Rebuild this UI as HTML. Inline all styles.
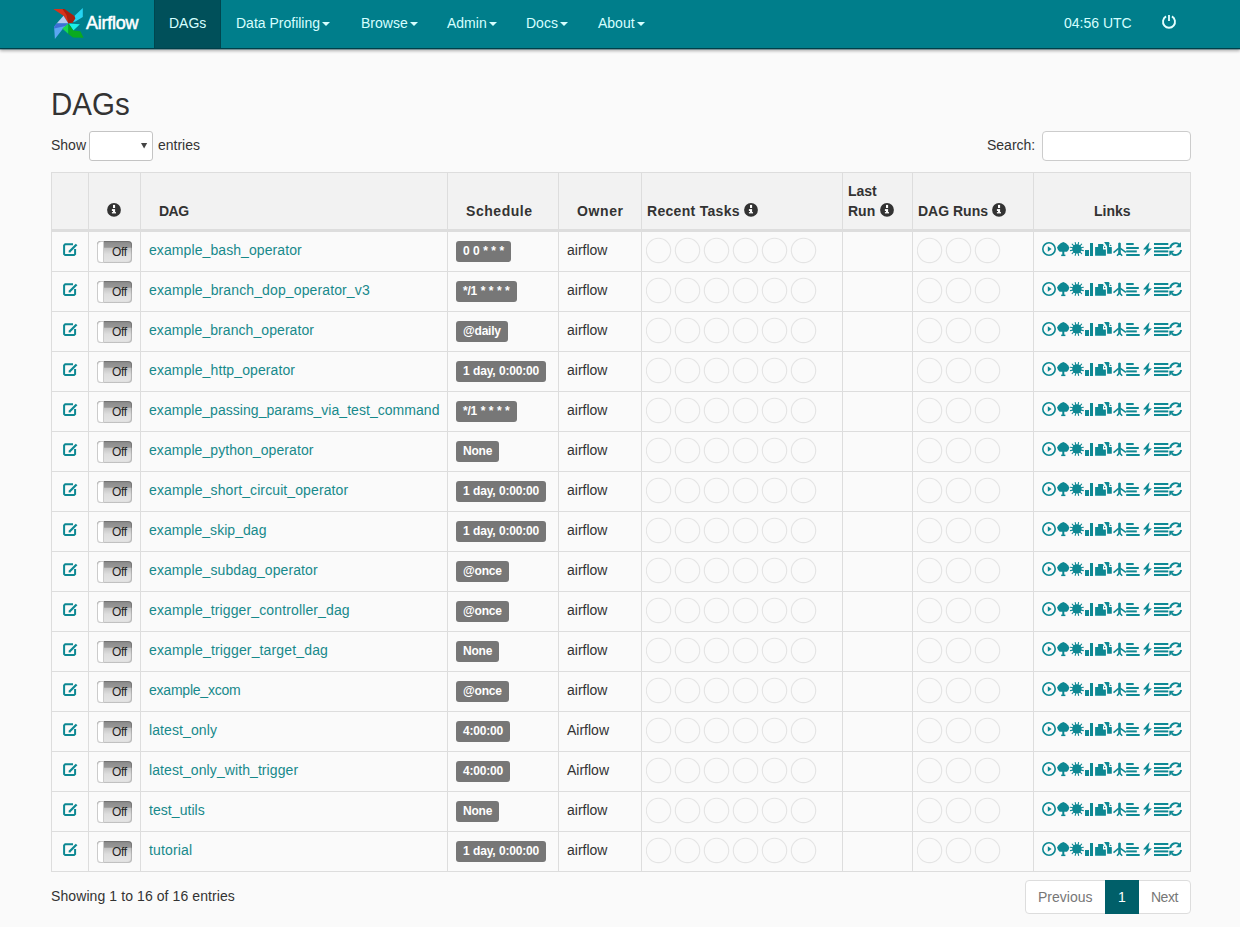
<!DOCTYPE html><html><head><meta charset="utf-8"><title>Airflow - DAGs</title><style>
*{box-sizing:border-box}
html,body{margin:0;padding:0}
body{width:1240px;height:927px;overflow:hidden;background:#fafafa;font-family:"Liberation Sans",sans-serif;font-size:14px;line-height:20px;color:#333;position:relative}
.a{position:absolute;white-space:nowrap}
#nav{position:absolute;left:0;top:0;width:1240px;height:49px;background:#007e8b;border-bottom:1px solid #003f49;box-shadow:0 1px 0 rgba(0,70,80,.35),0 2px 3px rgba(0,0,0,.3)}
#nav .it{position:absolute;top:13px;color:#d6ffff;font-size:14px;line-height:20px}
.caret{display:inline-block;width:0;height:0;margin-left:2px;vertical-align:middle;border-top:4px solid;border-right:4px solid transparent;border-left:4px solid transparent}
#act{position:absolute;left:154px;top:0;width:67px;height:48px;background:#00505a;box-shadow:inset 1px 0 0 rgba(0,0,0,.12),inset -1px 0 0 rgba(0,0,0,.12)}
h2{position:absolute;left:51px;top:86.4px;margin:0;font-size:30px;line-height:33px;font-weight:normal;color:#333;transform:scale(0.983,1.065);transform-origin:0 0}
.sel{position:absolute;left:89px;top:131px;width:64px;height:30px;background:#fff;border:1px solid #c4c4c4;border-radius:3px}
.inp{position:absolute;left:1042px;top:131px;width:149px;height:30px;background:#fff;border:1px solid #ccc;border-radius:4px}
.vl{position:absolute;top:172px;width:1px;height:700px;background:#ddd}
.hl{position:absolute;left:51px;width:1140px;height:1px;background:#ddd}
.th{position:absolute;font-weight:bold;line-height:20px}
.lnk{color:#17898b}
.lbl{position:absolute;top:241px;height:21px;background:#777;color:#fff;font-weight:bold;font-size:12px;line-height:21px;padding:0 7px;border-radius:3px;letter-spacing:-0.2px;word-spacing:0.5px}
.tog{position:absolute;left:97px;width:35px;height:22px;border-radius:4px;background:linear-gradient(#8a8a8a,#979797 28%,#c6c6c6 34%,#dedede 60%,#e6e6e6);box-shadow:inset -1px -1px 1px rgba(0,0,0,.18),inset 0 1px 1px rgba(0,0,0,.2)}
.tog .k{position:absolute;left:0;top:0;width:7px;height:22px;background:#fff;border-radius:4px 0 0 4px;border:1px solid #ccc}
.tog .t{position:absolute;left:15px;top:1px;font-size:12px;line-height:20px;color:#222;letter-spacing:-0.3px}
</style></head><body>
<div id="nav"><div id="act"></div>
<svg class="a" style="left:50px;top:5px" width="38" height="38" viewBox="0 0 38 38">
<polygon points="3.3,4.1 13.5,4.1 24.2,11.1 25.4,13.5 23,17.2 18.4,18.4 13.5,10.7" fill="#d8321b"/>
<polygon points="12.5,4.1 14.5,4.1 24.2,11.1 25.4,13.5 23,17.2 18.4,18.4 16.5,10" fill="#a8200f"/>
<polygon points="13.5,10.7 6.6,18.4 18.4,18.4" fill="#b4c8f0"/>
<polygon points="6.6,18.4 18.4,18.4 12.3,24.6 4.9,34 4.1,21.7" fill="#5aa6f2"/>
<polygon points="6.6,18.4 18.4,18.4 15.5,21 4.1,23.5 4.1,21.7" fill="#3e6fd6"/>
<polygon points="24.6,10.7 32.8,3.1 32.8,11.9 25.4,16.4 23,17.2 25.4,13.5" fill="#26d4f2"/>
<polygon points="18.8,18.4 29.9,19.3 23.4,25.4" fill="#1cf0e8"/>
<polygon points="12.3,23.5 18.4,18.4 18.4,29" fill="#17d94e"/>
<polygon points="18.4,18.4 23.4,25.4 30.3,26.2 33.6,32.8 23,32.5 18.4,29" fill="#0aaa1e"/>
</svg>
<div class="it" style="left:86px;font-size:18px;top:13px;color:#fff;-webkit-text-stroke:0.5px #fff;letter-spacing:-0.25px">Airflow</div>
<div class="it" style="left:169px">DAGs</div>
<div class="it" style="left:236px">Data Profiling<span class=caret></span></div>
<div class="it" style="left:361px">Browse<span class=caret></span></div>
<div class="it" style="left:447px">Admin<span class=caret></span></div>
<div class="it" style="left:526px">Docs<span class=caret></span></div>
<div class="it" style="left:598px">About<span class=caret></span></div>
<div class="it" style="left:1064px">04:56 UTC</div>
<svg class="a" style="left:1161px;top:14px" width="16" height="16" viewBox="0 0 16 16"><path d="M10.91 2.45 A6 6 0 1 1 5.09 2.45" fill="none" stroke="#e6ffff" stroke-width="1.9"/><line x1="8" y1="1" x2="8" y2="7" stroke="#e6ffff" stroke-width="1.8"/></svg>
</div>
<h2>DAGs</h2>
<div class="a" style="left:51px;top:135px">Show</div>
<div class="sel"></div><svg class="a" style="left:141px;top:143px" width="7" height="6"><polygon points="0,0 6.2,0 3.1,5.5" fill="#444"/></svg>
<div class="a" style="left:158px;top:135px">entries</div>
<div class="a" style="left:987px;top:135px">Search:</div>
<div class="inp"></div>
<div class="a" style="left:51px;top:173px;width:1140px;height:56px;background:#f2f2f2"></div>
<div class="a" style="left:51px;top:172px;width:1140px;height:1px;background:#ddd"></div>
<div class="a" style="left:51px;top:229px;width:1140px;height:3px;background:#ddd"></div>
<div class="hl" style="top:271px"></div>
<div class="hl" style="top:311px"></div>
<div class="hl" style="top:351px"></div>
<div class="hl" style="top:391px"></div>
<div class="hl" style="top:431px"></div>
<div class="hl" style="top:471px"></div>
<div class="hl" style="top:511px"></div>
<div class="hl" style="top:551px"></div>
<div class="hl" style="top:591px"></div>
<div class="hl" style="top:631px"></div>
<div class="hl" style="top:671px"></div>
<div class="hl" style="top:711px"></div>
<div class="hl" style="top:751px"></div>
<div class="hl" style="top:791px"></div>
<div class="hl" style="top:831px"></div>
<div class="hl" style="top:871px"></div>
<div class="vl" style="left:51px"></div>
<div class="vl" style="left:88px"></div>
<div class="vl" style="left:140px"></div>
<div class="vl" style="left:447px"></div>
<div class="vl" style="left:558px"></div>
<div class="vl" style="left:641px"></div>
<div class="vl" style="left:842px"></div>
<div class="vl" style="left:912px"></div>
<div class="vl" style="left:1033px"></div>
<div class="vl" style="left:1190px"></div>
<svg class="a" style="left:107px;top:203px" width="14" height="14" viewBox="0 0 14 14"><circle cx="7" cy="6.9" r="6.9" fill="#333"/><rect x="6" y="1.9" width="2.1" height="3.1" fill="#fff"/><rect x="6" y="6.1" width="2.1" height="3.3" fill="#fff"/><rect x="4.9" y="9.1" width="4.1" height="1.3" fill="#fff"/><rect x="4.9" y="6.1" width="1.2" height="1.9" fill="#fff"/></svg>
<div class="th a" style="left:159px;top:201px;letter-spacing:-0.5px">DAG</div>
<div class="th a" style="left:466px;top:201px;letter-spacing:0.55px">Schedule</div>
<div class="th a" style="left:577px;top:201px;letter-spacing:0.6px">Owner</div>
<div class="th a" style="left:647px;top:201px;letter-spacing:0.3px">Recent Tasks</div>
<svg class="a" style="left:744px;top:203px" width="14" height="14" viewBox="0 0 14 14"><circle cx="7" cy="6.9" r="6.9" fill="#333"/><rect x="6" y="1.9" width="2.1" height="3.1" fill="#fff"/><rect x="6" y="6.1" width="2.1" height="3.3" fill="#fff"/><rect x="4.9" y="9.1" width="4.1" height="1.3" fill="#fff"/><rect x="4.9" y="6.1" width="1.2" height="1.9" fill="#fff"/></svg>
<div class="th a" style="left:848px;top:181px">Last</div>
<div class="th a" style="left:848px;top:201px">Run</div>
<svg class="a" style="left:880px;top:203px" width="14" height="14" viewBox="0 0 14 14"><circle cx="7" cy="6.9" r="6.9" fill="#333"/><rect x="6" y="1.9" width="2.1" height="3.1" fill="#fff"/><rect x="6" y="6.1" width="2.1" height="3.3" fill="#fff"/><rect x="4.9" y="9.1" width="4.1" height="1.3" fill="#fff"/><rect x="4.9" y="6.1" width="1.2" height="1.9" fill="#fff"/></svg>
<div class="th a" style="left:918px;top:201px">DAG Runs</div>
<svg class="a" style="left:992px;top:203px" width="14" height="14" viewBox="0 0 14 14"><circle cx="7" cy="6.9" r="6.9" fill="#333"/><rect x="6" y="1.9" width="2.1" height="3.1" fill="#fff"/><rect x="6" y="6.1" width="2.1" height="3.3" fill="#fff"/><rect x="4.9" y="9.1" width="4.1" height="1.3" fill="#fff"/><rect x="4.9" y="6.1" width="1.2" height="1.9" fill="#fff"/></svg>
<div class="th a" style="left:1094px;top:201px">Links</div>
<svg class="a" style="left:61px;top:241px" width="17" height="17" viewBox="0 0 17 17"><path d="M12 3.2 L4.2 3.2 L3.1 4.3 L3.1 13 L4.2 14.1 L13 14.1 L14.1 13 L14.1 8" fill="none" stroke="#0d8893" stroke-width="2"/><path d="M8.3 10.8 L15.6 3.5" stroke="#0d8893" stroke-width="2.3"/><path d="M7.6 11.6 L8 9.6 L9.6 11.2 Z" fill="#0d8893"/></svg>
<div class="tog" style="top:241px"><div class="k"></div><div class="t">Off</div></div>
<div class="a lnk" style="left:149px;top:240px;letter-spacing:0.088px">example_bash_operator</div>
<div class="lbl" style="left:456px;top:241px">0 0 * * *</div>
<div class="a" style="left:567px;top:240px">airflow</div>
<svg class="a" style="left:646px;top:237px" width="174" height="28"><circle cx="12.5" cy="13.4" r="12.2" fill="none" stroke="#e4e4e4" stroke-width="1.1"/><circle cx="41.5" cy="13.4" r="12.2" fill="none" stroke="#e4e4e4" stroke-width="1.1"/><circle cx="70.5" cy="13.4" r="12.2" fill="none" stroke="#e4e4e4" stroke-width="1.1"/><circle cx="99.5" cy="13.4" r="12.2" fill="none" stroke="#e4e4e4" stroke-width="1.1"/><circle cx="128.5" cy="13.4" r="12.2" fill="none" stroke="#e4e4e4" stroke-width="1.1"/><circle cx="157.5" cy="13.4" r="12.2" fill="none" stroke="#e4e4e4" stroke-width="1.1"/></svg>
<svg class="a" style="left:917px;top:237px" width="87" height="28"><circle cx="12.5" cy="13.4" r="12.2" fill="none" stroke="#e4e4e4" stroke-width="1.1"/><circle cx="41.5" cy="13.4" r="12.2" fill="none" stroke="#e4e4e4" stroke-width="1.1"/><circle cx="70.5" cy="13.4" r="12.2" fill="none" stroke="#e4e4e4" stroke-width="1.1"/></svg>
<svg class="a" style="left:1042px;top:241px" width="142" height="16" viewBox="0 0 142 16" fill="#0d8893"><circle cx="7" cy="8" r="6.2" fill="none" stroke="#0d8893" stroke-width="1.6"/><path d="M5.8 5.2 L9.6 8 L5.8 10.8 Z"/><path d="M21.3 1 L24 2.2 L26 4.3 L27.4 6.6 L26.5 9 L25 10.7 L17.6 10.7 L16.1 9 L15 6.6 L16.5 4.3 L18.6 2.2 Z"/><rect x="20.3" y="10" width="2" height="4"/><rect x="19.2" y="13.6" width="4.2" height="1.5"/><circle cx="34.9" cy="7.9" r="4.7"/><path d="M35.94 4.04 L36.63 1.43 M37.73 5.07 L39.64 3.16 M38.76 6.86 L41.37 6.17 M38.76 8.94 L41.37 9.63 M37.73 10.73 L39.64 12.64 M35.94 11.76 L36.63 14.37 M33.86 11.76 L33.17 14.37 M32.07 10.73 L30.16 12.64 M31.04 8.94 L28.43 9.63 M31.04 6.86 L28.43 6.17 M32.07 5.07 L30.16 3.16 M33.86 4.04 L33.17 1.43 " stroke="#0d8893" stroke-width="1.05" stroke-linecap="round"/><rect x="43" y="9" width="4" height="6"/><rect x="48" y="2" width="3" height="13"/><path d="M53.1 6 L56.1 6 L56.1 3.1 L60.8 3.1 L61.9 4.3 L61 5.2 L61 8.5 L63.9 8.5 L63.9 14.8 L53.1 14.8 Z"/><path d="M62 5.3 L63.9 7 L62 7 Z"/><path d="M62.1 1.05 L66.7 1.05 L67.8 2.2 L67 3 L67 5.9 L69.8 5.9 L69.8 12.8 L65.1 12.8 L65.1 5.6 Z"/><path d="M67.8 3.2 L69.8 5.1 L67.8 5.1 Z"/><path d="M76.2 2.2 Q77.5 0.6 78.8 2.2 L78.8 12.5 L76.2 12.5 Z"/><path d="M76.6 7.4 L71.5 11.6 M78.4 7.4 L83.9 11.4 M77.5 12 L75 14.8 M77.5 12 L80.2 14.8" fill="none" stroke="#0d8893" stroke-width="1.6"/><rect x="84.2" y="2" width="7.5" height="2"/><rect x="84.2" y="6" width="12.6" height="2"/><rect x="84.2" y="9.4" width="10.6" height="2"/><rect x="84.2" y="13" width="13.5" height="2"/><path d="M107.6 1 L101 8.4 L104.8 8.4 L102.2 15 L110 7.4 L106.2 7.4 Z"/><rect x="112" y="2" width="14.3" height="2"/><rect x="112" y="6" width="15.5" height="2"/><rect x="112" y="9.4" width="14.3" height="2"/><rect x="112" y="13" width="14.3" height="2"/><path d="M128.2 7 A5.6 5.6 0 0 1 137.5 3.6 M139.1 9 A5.6 5.6 0 0 1 129.7 12.5" fill="none" stroke="#0d8893" stroke-width="1.9"/><path d="M139 1 L139 6.3 L133.8 6.3 Z"/><path d="M127.3 15 L127.3 9.8 L132.5 9.8 Z"/></svg>
<svg class="a" style="left:61px;top:281px" width="17" height="17" viewBox="0 0 17 17"><path d="M12 3.2 L4.2 3.2 L3.1 4.3 L3.1 13 L4.2 14.1 L13 14.1 L14.1 13 L14.1 8" fill="none" stroke="#0d8893" stroke-width="2"/><path d="M8.3 10.8 L15.6 3.5" stroke="#0d8893" stroke-width="2.3"/><path d="M7.6 11.6 L8 9.6 L9.6 11.2 Z" fill="#0d8893"/></svg>
<div class="tog" style="top:281px"><div class="k"></div><div class="t">Off</div></div>
<div class="a lnk" style="left:149px;top:280px;letter-spacing:0.121px">example_branch_dop_operator_v3</div>
<div class="lbl" style="left:456px;top:281px">*/1 * * * *</div>
<div class="a" style="left:567px;top:280px">airflow</div>
<svg class="a" style="left:646px;top:277px" width="174" height="28"><circle cx="12.5" cy="13.4" r="12.2" fill="none" stroke="#e4e4e4" stroke-width="1.1"/><circle cx="41.5" cy="13.4" r="12.2" fill="none" stroke="#e4e4e4" stroke-width="1.1"/><circle cx="70.5" cy="13.4" r="12.2" fill="none" stroke="#e4e4e4" stroke-width="1.1"/><circle cx="99.5" cy="13.4" r="12.2" fill="none" stroke="#e4e4e4" stroke-width="1.1"/><circle cx="128.5" cy="13.4" r="12.2" fill="none" stroke="#e4e4e4" stroke-width="1.1"/><circle cx="157.5" cy="13.4" r="12.2" fill="none" stroke="#e4e4e4" stroke-width="1.1"/></svg>
<svg class="a" style="left:917px;top:277px" width="87" height="28"><circle cx="12.5" cy="13.4" r="12.2" fill="none" stroke="#e4e4e4" stroke-width="1.1"/><circle cx="41.5" cy="13.4" r="12.2" fill="none" stroke="#e4e4e4" stroke-width="1.1"/><circle cx="70.5" cy="13.4" r="12.2" fill="none" stroke="#e4e4e4" stroke-width="1.1"/></svg>
<svg class="a" style="left:1042px;top:281px" width="142" height="16" viewBox="0 0 142 16" fill="#0d8893"><circle cx="7" cy="8" r="6.2" fill="none" stroke="#0d8893" stroke-width="1.6"/><path d="M5.8 5.2 L9.6 8 L5.8 10.8 Z"/><path d="M21.3 1 L24 2.2 L26 4.3 L27.4 6.6 L26.5 9 L25 10.7 L17.6 10.7 L16.1 9 L15 6.6 L16.5 4.3 L18.6 2.2 Z"/><rect x="20.3" y="10" width="2" height="4"/><rect x="19.2" y="13.6" width="4.2" height="1.5"/><circle cx="34.9" cy="7.9" r="4.7"/><path d="M35.94 4.04 L36.63 1.43 M37.73 5.07 L39.64 3.16 M38.76 6.86 L41.37 6.17 M38.76 8.94 L41.37 9.63 M37.73 10.73 L39.64 12.64 M35.94 11.76 L36.63 14.37 M33.86 11.76 L33.17 14.37 M32.07 10.73 L30.16 12.64 M31.04 8.94 L28.43 9.63 M31.04 6.86 L28.43 6.17 M32.07 5.07 L30.16 3.16 M33.86 4.04 L33.17 1.43 " stroke="#0d8893" stroke-width="1.05" stroke-linecap="round"/><rect x="43" y="9" width="4" height="6"/><rect x="48" y="2" width="3" height="13"/><path d="M53.1 6 L56.1 6 L56.1 3.1 L60.8 3.1 L61.9 4.3 L61 5.2 L61 8.5 L63.9 8.5 L63.9 14.8 L53.1 14.8 Z"/><path d="M62 5.3 L63.9 7 L62 7 Z"/><path d="M62.1 1.05 L66.7 1.05 L67.8 2.2 L67 3 L67 5.9 L69.8 5.9 L69.8 12.8 L65.1 12.8 L65.1 5.6 Z"/><path d="M67.8 3.2 L69.8 5.1 L67.8 5.1 Z"/><path d="M76.2 2.2 Q77.5 0.6 78.8 2.2 L78.8 12.5 L76.2 12.5 Z"/><path d="M76.6 7.4 L71.5 11.6 M78.4 7.4 L83.9 11.4 M77.5 12 L75 14.8 M77.5 12 L80.2 14.8" fill="none" stroke="#0d8893" stroke-width="1.6"/><rect x="84.2" y="2" width="7.5" height="2"/><rect x="84.2" y="6" width="12.6" height="2"/><rect x="84.2" y="9.4" width="10.6" height="2"/><rect x="84.2" y="13" width="13.5" height="2"/><path d="M107.6 1 L101 8.4 L104.8 8.4 L102.2 15 L110 7.4 L106.2 7.4 Z"/><rect x="112" y="2" width="14.3" height="2"/><rect x="112" y="6" width="15.5" height="2"/><rect x="112" y="9.4" width="14.3" height="2"/><rect x="112" y="13" width="14.3" height="2"/><path d="M128.2 7 A5.6 5.6 0 0 1 137.5 3.6 M139.1 9 A5.6 5.6 0 0 1 129.7 12.5" fill="none" stroke="#0d8893" stroke-width="1.9"/><path d="M139 1 L139 6.3 L133.8 6.3 Z"/><path d="M127.3 15 L127.3 9.8 L132.5 9.8 Z"/></svg>
<svg class="a" style="left:61px;top:321px" width="17" height="17" viewBox="0 0 17 17"><path d="M12 3.2 L4.2 3.2 L3.1 4.3 L3.1 13 L4.2 14.1 L13 14.1 L14.1 13 L14.1 8" fill="none" stroke="#0d8893" stroke-width="2"/><path d="M8.3 10.8 L15.6 3.5" stroke="#0d8893" stroke-width="2.3"/><path d="M7.6 11.6 L8 9.6 L9.6 11.2 Z" fill="#0d8893"/></svg>
<div class="tog" style="top:321px"><div class="k"></div><div class="t">Off</div></div>
<div class="a lnk" style="left:149px;top:320px;letter-spacing:0.068px">example_branch_operator</div>
<div class="lbl" style="left:456px;top:321px">@daily</div>
<div class="a" style="left:567px;top:320px">airflow</div>
<svg class="a" style="left:646px;top:317px" width="174" height="28"><circle cx="12.5" cy="13.4" r="12.2" fill="none" stroke="#e4e4e4" stroke-width="1.1"/><circle cx="41.5" cy="13.4" r="12.2" fill="none" stroke="#e4e4e4" stroke-width="1.1"/><circle cx="70.5" cy="13.4" r="12.2" fill="none" stroke="#e4e4e4" stroke-width="1.1"/><circle cx="99.5" cy="13.4" r="12.2" fill="none" stroke="#e4e4e4" stroke-width="1.1"/><circle cx="128.5" cy="13.4" r="12.2" fill="none" stroke="#e4e4e4" stroke-width="1.1"/><circle cx="157.5" cy="13.4" r="12.2" fill="none" stroke="#e4e4e4" stroke-width="1.1"/></svg>
<svg class="a" style="left:917px;top:317px" width="87" height="28"><circle cx="12.5" cy="13.4" r="12.2" fill="none" stroke="#e4e4e4" stroke-width="1.1"/><circle cx="41.5" cy="13.4" r="12.2" fill="none" stroke="#e4e4e4" stroke-width="1.1"/><circle cx="70.5" cy="13.4" r="12.2" fill="none" stroke="#e4e4e4" stroke-width="1.1"/></svg>
<svg class="a" style="left:1042px;top:321px" width="142" height="16" viewBox="0 0 142 16" fill="#0d8893"><circle cx="7" cy="8" r="6.2" fill="none" stroke="#0d8893" stroke-width="1.6"/><path d="M5.8 5.2 L9.6 8 L5.8 10.8 Z"/><path d="M21.3 1 L24 2.2 L26 4.3 L27.4 6.6 L26.5 9 L25 10.7 L17.6 10.7 L16.1 9 L15 6.6 L16.5 4.3 L18.6 2.2 Z"/><rect x="20.3" y="10" width="2" height="4"/><rect x="19.2" y="13.6" width="4.2" height="1.5"/><circle cx="34.9" cy="7.9" r="4.7"/><path d="M35.94 4.04 L36.63 1.43 M37.73 5.07 L39.64 3.16 M38.76 6.86 L41.37 6.17 M38.76 8.94 L41.37 9.63 M37.73 10.73 L39.64 12.64 M35.94 11.76 L36.63 14.37 M33.86 11.76 L33.17 14.37 M32.07 10.73 L30.16 12.64 M31.04 8.94 L28.43 9.63 M31.04 6.86 L28.43 6.17 M32.07 5.07 L30.16 3.16 M33.86 4.04 L33.17 1.43 " stroke="#0d8893" stroke-width="1.05" stroke-linecap="round"/><rect x="43" y="9" width="4" height="6"/><rect x="48" y="2" width="3" height="13"/><path d="M53.1 6 L56.1 6 L56.1 3.1 L60.8 3.1 L61.9 4.3 L61 5.2 L61 8.5 L63.9 8.5 L63.9 14.8 L53.1 14.8 Z"/><path d="M62 5.3 L63.9 7 L62 7 Z"/><path d="M62.1 1.05 L66.7 1.05 L67.8 2.2 L67 3 L67 5.9 L69.8 5.9 L69.8 12.8 L65.1 12.8 L65.1 5.6 Z"/><path d="M67.8 3.2 L69.8 5.1 L67.8 5.1 Z"/><path d="M76.2 2.2 Q77.5 0.6 78.8 2.2 L78.8 12.5 L76.2 12.5 Z"/><path d="M76.6 7.4 L71.5 11.6 M78.4 7.4 L83.9 11.4 M77.5 12 L75 14.8 M77.5 12 L80.2 14.8" fill="none" stroke="#0d8893" stroke-width="1.6"/><rect x="84.2" y="2" width="7.5" height="2"/><rect x="84.2" y="6" width="12.6" height="2"/><rect x="84.2" y="9.4" width="10.6" height="2"/><rect x="84.2" y="13" width="13.5" height="2"/><path d="M107.6 1 L101 8.4 L104.8 8.4 L102.2 15 L110 7.4 L106.2 7.4 Z"/><rect x="112" y="2" width="14.3" height="2"/><rect x="112" y="6" width="15.5" height="2"/><rect x="112" y="9.4" width="14.3" height="2"/><rect x="112" y="13" width="14.3" height="2"/><path d="M128.2 7 A5.6 5.6 0 0 1 137.5 3.6 M139.1 9 A5.6 5.6 0 0 1 129.7 12.5" fill="none" stroke="#0d8893" stroke-width="1.9"/><path d="M139 1 L139 6.3 L133.8 6.3 Z"/><path d="M127.3 15 L127.3 9.8 L132.5 9.8 Z"/></svg>
<svg class="a" style="left:61px;top:361px" width="17" height="17" viewBox="0 0 17 17"><path d="M12 3.2 L4.2 3.2 L3.1 4.3 L3.1 13 L4.2 14.1 L13 14.1 L14.1 13 L14.1 8" fill="none" stroke="#0d8893" stroke-width="2"/><path d="M8.3 10.8 L15.6 3.5" stroke="#0d8893" stroke-width="2.3"/><path d="M7.6 11.6 L8 9.6 L9.6 11.2 Z" fill="#0d8893"/></svg>
<div class="tog" style="top:361px"><div class="k"></div><div class="t">Off</div></div>
<div class="a lnk" style="left:149px;top:360px;letter-spacing:0.1px">example_http_operator</div>
<div class="lbl" style="left:456px;top:361px">1 day, 0:00:00</div>
<div class="a" style="left:567px;top:360px">airflow</div>
<svg class="a" style="left:646px;top:357px" width="174" height="28"><circle cx="12.5" cy="13.4" r="12.2" fill="none" stroke="#e4e4e4" stroke-width="1.1"/><circle cx="41.5" cy="13.4" r="12.2" fill="none" stroke="#e4e4e4" stroke-width="1.1"/><circle cx="70.5" cy="13.4" r="12.2" fill="none" stroke="#e4e4e4" stroke-width="1.1"/><circle cx="99.5" cy="13.4" r="12.2" fill="none" stroke="#e4e4e4" stroke-width="1.1"/><circle cx="128.5" cy="13.4" r="12.2" fill="none" stroke="#e4e4e4" stroke-width="1.1"/><circle cx="157.5" cy="13.4" r="12.2" fill="none" stroke="#e4e4e4" stroke-width="1.1"/></svg>
<svg class="a" style="left:917px;top:357px" width="87" height="28"><circle cx="12.5" cy="13.4" r="12.2" fill="none" stroke="#e4e4e4" stroke-width="1.1"/><circle cx="41.5" cy="13.4" r="12.2" fill="none" stroke="#e4e4e4" stroke-width="1.1"/><circle cx="70.5" cy="13.4" r="12.2" fill="none" stroke="#e4e4e4" stroke-width="1.1"/></svg>
<svg class="a" style="left:1042px;top:361px" width="142" height="16" viewBox="0 0 142 16" fill="#0d8893"><circle cx="7" cy="8" r="6.2" fill="none" stroke="#0d8893" stroke-width="1.6"/><path d="M5.8 5.2 L9.6 8 L5.8 10.8 Z"/><path d="M21.3 1 L24 2.2 L26 4.3 L27.4 6.6 L26.5 9 L25 10.7 L17.6 10.7 L16.1 9 L15 6.6 L16.5 4.3 L18.6 2.2 Z"/><rect x="20.3" y="10" width="2" height="4"/><rect x="19.2" y="13.6" width="4.2" height="1.5"/><circle cx="34.9" cy="7.9" r="4.7"/><path d="M35.94 4.04 L36.63 1.43 M37.73 5.07 L39.64 3.16 M38.76 6.86 L41.37 6.17 M38.76 8.94 L41.37 9.63 M37.73 10.73 L39.64 12.64 M35.94 11.76 L36.63 14.37 M33.86 11.76 L33.17 14.37 M32.07 10.73 L30.16 12.64 M31.04 8.94 L28.43 9.63 M31.04 6.86 L28.43 6.17 M32.07 5.07 L30.16 3.16 M33.86 4.04 L33.17 1.43 " stroke="#0d8893" stroke-width="1.05" stroke-linecap="round"/><rect x="43" y="9" width="4" height="6"/><rect x="48" y="2" width="3" height="13"/><path d="M53.1 6 L56.1 6 L56.1 3.1 L60.8 3.1 L61.9 4.3 L61 5.2 L61 8.5 L63.9 8.5 L63.9 14.8 L53.1 14.8 Z"/><path d="M62 5.3 L63.9 7 L62 7 Z"/><path d="M62.1 1.05 L66.7 1.05 L67.8 2.2 L67 3 L67 5.9 L69.8 5.9 L69.8 12.8 L65.1 12.8 L65.1 5.6 Z"/><path d="M67.8 3.2 L69.8 5.1 L67.8 5.1 Z"/><path d="M76.2 2.2 Q77.5 0.6 78.8 2.2 L78.8 12.5 L76.2 12.5 Z"/><path d="M76.6 7.4 L71.5 11.6 M78.4 7.4 L83.9 11.4 M77.5 12 L75 14.8 M77.5 12 L80.2 14.8" fill="none" stroke="#0d8893" stroke-width="1.6"/><rect x="84.2" y="2" width="7.5" height="2"/><rect x="84.2" y="6" width="12.6" height="2"/><rect x="84.2" y="9.4" width="10.6" height="2"/><rect x="84.2" y="13" width="13.5" height="2"/><path d="M107.6 1 L101 8.4 L104.8 8.4 L102.2 15 L110 7.4 L106.2 7.4 Z"/><rect x="112" y="2" width="14.3" height="2"/><rect x="112" y="6" width="15.5" height="2"/><rect x="112" y="9.4" width="14.3" height="2"/><rect x="112" y="13" width="14.3" height="2"/><path d="M128.2 7 A5.6 5.6 0 0 1 137.5 3.6 M139.1 9 A5.6 5.6 0 0 1 129.7 12.5" fill="none" stroke="#0d8893" stroke-width="1.9"/><path d="M139 1 L139 6.3 L133.8 6.3 Z"/><path d="M127.3 15 L127.3 9.8 L132.5 9.8 Z"/></svg>
<svg class="a" style="left:61px;top:401px" width="17" height="17" viewBox="0 0 17 17"><path d="M12 3.2 L4.2 3.2 L3.1 4.3 L3.1 13 L4.2 14.1 L13 14.1 L14.1 13 L14.1 8" fill="none" stroke="#0d8893" stroke-width="2"/><path d="M8.3 10.8 L15.6 3.5" stroke="#0d8893" stroke-width="2.3"/><path d="M7.6 11.6 L8 9.6 L9.6 11.2 Z" fill="#0d8893"/></svg>
<div class="tog" style="top:401px"><div class="k"></div><div class="t">Off</div></div>
<div class="a lnk" style="left:149px;top:400px;letter-spacing:0.046px">example_passing_params_via_test_command</div>
<div class="lbl" style="left:456px;top:401px">*/1 * * * *</div>
<div class="a" style="left:567px;top:400px">airflow</div>
<svg class="a" style="left:646px;top:397px" width="174" height="28"><circle cx="12.5" cy="13.4" r="12.2" fill="none" stroke="#e4e4e4" stroke-width="1.1"/><circle cx="41.5" cy="13.4" r="12.2" fill="none" stroke="#e4e4e4" stroke-width="1.1"/><circle cx="70.5" cy="13.4" r="12.2" fill="none" stroke="#e4e4e4" stroke-width="1.1"/><circle cx="99.5" cy="13.4" r="12.2" fill="none" stroke="#e4e4e4" stroke-width="1.1"/><circle cx="128.5" cy="13.4" r="12.2" fill="none" stroke="#e4e4e4" stroke-width="1.1"/><circle cx="157.5" cy="13.4" r="12.2" fill="none" stroke="#e4e4e4" stroke-width="1.1"/></svg>
<svg class="a" style="left:917px;top:397px" width="87" height="28"><circle cx="12.5" cy="13.4" r="12.2" fill="none" stroke="#e4e4e4" stroke-width="1.1"/><circle cx="41.5" cy="13.4" r="12.2" fill="none" stroke="#e4e4e4" stroke-width="1.1"/><circle cx="70.5" cy="13.4" r="12.2" fill="none" stroke="#e4e4e4" stroke-width="1.1"/></svg>
<svg class="a" style="left:1042px;top:401px" width="142" height="16" viewBox="0 0 142 16" fill="#0d8893"><circle cx="7" cy="8" r="6.2" fill="none" stroke="#0d8893" stroke-width="1.6"/><path d="M5.8 5.2 L9.6 8 L5.8 10.8 Z"/><path d="M21.3 1 L24 2.2 L26 4.3 L27.4 6.6 L26.5 9 L25 10.7 L17.6 10.7 L16.1 9 L15 6.6 L16.5 4.3 L18.6 2.2 Z"/><rect x="20.3" y="10" width="2" height="4"/><rect x="19.2" y="13.6" width="4.2" height="1.5"/><circle cx="34.9" cy="7.9" r="4.7"/><path d="M35.94 4.04 L36.63 1.43 M37.73 5.07 L39.64 3.16 M38.76 6.86 L41.37 6.17 M38.76 8.94 L41.37 9.63 M37.73 10.73 L39.64 12.64 M35.94 11.76 L36.63 14.37 M33.86 11.76 L33.17 14.37 M32.07 10.73 L30.16 12.64 M31.04 8.94 L28.43 9.63 M31.04 6.86 L28.43 6.17 M32.07 5.07 L30.16 3.16 M33.86 4.04 L33.17 1.43 " stroke="#0d8893" stroke-width="1.05" stroke-linecap="round"/><rect x="43" y="9" width="4" height="6"/><rect x="48" y="2" width="3" height="13"/><path d="M53.1 6 L56.1 6 L56.1 3.1 L60.8 3.1 L61.9 4.3 L61 5.2 L61 8.5 L63.9 8.5 L63.9 14.8 L53.1 14.8 Z"/><path d="M62 5.3 L63.9 7 L62 7 Z"/><path d="M62.1 1.05 L66.7 1.05 L67.8 2.2 L67 3 L67 5.9 L69.8 5.9 L69.8 12.8 L65.1 12.8 L65.1 5.6 Z"/><path d="M67.8 3.2 L69.8 5.1 L67.8 5.1 Z"/><path d="M76.2 2.2 Q77.5 0.6 78.8 2.2 L78.8 12.5 L76.2 12.5 Z"/><path d="M76.6 7.4 L71.5 11.6 M78.4 7.4 L83.9 11.4 M77.5 12 L75 14.8 M77.5 12 L80.2 14.8" fill="none" stroke="#0d8893" stroke-width="1.6"/><rect x="84.2" y="2" width="7.5" height="2"/><rect x="84.2" y="6" width="12.6" height="2"/><rect x="84.2" y="9.4" width="10.6" height="2"/><rect x="84.2" y="13" width="13.5" height="2"/><path d="M107.6 1 L101 8.4 L104.8 8.4 L102.2 15 L110 7.4 L106.2 7.4 Z"/><rect x="112" y="2" width="14.3" height="2"/><rect x="112" y="6" width="15.5" height="2"/><rect x="112" y="9.4" width="14.3" height="2"/><rect x="112" y="13" width="14.3" height="2"/><path d="M128.2 7 A5.6 5.6 0 0 1 137.5 3.6 M139.1 9 A5.6 5.6 0 0 1 129.7 12.5" fill="none" stroke="#0d8893" stroke-width="1.9"/><path d="M139 1 L139 6.3 L133.8 6.3 Z"/><path d="M127.3 15 L127.3 9.8 L132.5 9.8 Z"/></svg>
<svg class="a" style="left:61px;top:441px" width="17" height="17" viewBox="0 0 17 17"><path d="M12 3.2 L4.2 3.2 L3.1 4.3 L3.1 13 L4.2 14.1 L13 14.1 L14.1 13 L14.1 8" fill="none" stroke="#0d8893" stroke-width="2"/><path d="M8.3 10.8 L15.6 3.5" stroke="#0d8893" stroke-width="2.3"/><path d="M7.6 11.6 L8 9.6 L9.6 11.2 Z" fill="#0d8893"/></svg>
<div class="tog" style="top:441px"><div class="k"></div><div class="t">Off</div></div>
<div class="a lnk" style="left:149px;top:440px;letter-spacing:0.08px">example_python_operator</div>
<div class="lbl" style="left:456px;top:441px">None</div>
<div class="a" style="left:567px;top:440px">airflow</div>
<svg class="a" style="left:646px;top:437px" width="174" height="28"><circle cx="12.5" cy="13.4" r="12.2" fill="none" stroke="#e4e4e4" stroke-width="1.1"/><circle cx="41.5" cy="13.4" r="12.2" fill="none" stroke="#e4e4e4" stroke-width="1.1"/><circle cx="70.5" cy="13.4" r="12.2" fill="none" stroke="#e4e4e4" stroke-width="1.1"/><circle cx="99.5" cy="13.4" r="12.2" fill="none" stroke="#e4e4e4" stroke-width="1.1"/><circle cx="128.5" cy="13.4" r="12.2" fill="none" stroke="#e4e4e4" stroke-width="1.1"/><circle cx="157.5" cy="13.4" r="12.2" fill="none" stroke="#e4e4e4" stroke-width="1.1"/></svg>
<svg class="a" style="left:917px;top:437px" width="87" height="28"><circle cx="12.5" cy="13.4" r="12.2" fill="none" stroke="#e4e4e4" stroke-width="1.1"/><circle cx="41.5" cy="13.4" r="12.2" fill="none" stroke="#e4e4e4" stroke-width="1.1"/><circle cx="70.5" cy="13.4" r="12.2" fill="none" stroke="#e4e4e4" stroke-width="1.1"/></svg>
<svg class="a" style="left:1042px;top:441px" width="142" height="16" viewBox="0 0 142 16" fill="#0d8893"><circle cx="7" cy="8" r="6.2" fill="none" stroke="#0d8893" stroke-width="1.6"/><path d="M5.8 5.2 L9.6 8 L5.8 10.8 Z"/><path d="M21.3 1 L24 2.2 L26 4.3 L27.4 6.6 L26.5 9 L25 10.7 L17.6 10.7 L16.1 9 L15 6.6 L16.5 4.3 L18.6 2.2 Z"/><rect x="20.3" y="10" width="2" height="4"/><rect x="19.2" y="13.6" width="4.2" height="1.5"/><circle cx="34.9" cy="7.9" r="4.7"/><path d="M35.94 4.04 L36.63 1.43 M37.73 5.07 L39.64 3.16 M38.76 6.86 L41.37 6.17 M38.76 8.94 L41.37 9.63 M37.73 10.73 L39.64 12.64 M35.94 11.76 L36.63 14.37 M33.86 11.76 L33.17 14.37 M32.07 10.73 L30.16 12.64 M31.04 8.94 L28.43 9.63 M31.04 6.86 L28.43 6.17 M32.07 5.07 L30.16 3.16 M33.86 4.04 L33.17 1.43 " stroke="#0d8893" stroke-width="1.05" stroke-linecap="round"/><rect x="43" y="9" width="4" height="6"/><rect x="48" y="2" width="3" height="13"/><path d="M53.1 6 L56.1 6 L56.1 3.1 L60.8 3.1 L61.9 4.3 L61 5.2 L61 8.5 L63.9 8.5 L63.9 14.8 L53.1 14.8 Z"/><path d="M62 5.3 L63.9 7 L62 7 Z"/><path d="M62.1 1.05 L66.7 1.05 L67.8 2.2 L67 3 L67 5.9 L69.8 5.9 L69.8 12.8 L65.1 12.8 L65.1 5.6 Z"/><path d="M67.8 3.2 L69.8 5.1 L67.8 5.1 Z"/><path d="M76.2 2.2 Q77.5 0.6 78.8 2.2 L78.8 12.5 L76.2 12.5 Z"/><path d="M76.6 7.4 L71.5 11.6 M78.4 7.4 L83.9 11.4 M77.5 12 L75 14.8 M77.5 12 L80.2 14.8" fill="none" stroke="#0d8893" stroke-width="1.6"/><rect x="84.2" y="2" width="7.5" height="2"/><rect x="84.2" y="6" width="12.6" height="2"/><rect x="84.2" y="9.4" width="10.6" height="2"/><rect x="84.2" y="13" width="13.5" height="2"/><path d="M107.6 1 L101 8.4 L104.8 8.4 L102.2 15 L110 7.4 L106.2 7.4 Z"/><rect x="112" y="2" width="14.3" height="2"/><rect x="112" y="6" width="15.5" height="2"/><rect x="112" y="9.4" width="14.3" height="2"/><rect x="112" y="13" width="14.3" height="2"/><path d="M128.2 7 A5.6 5.6 0 0 1 137.5 3.6 M139.1 9 A5.6 5.6 0 0 1 129.7 12.5" fill="none" stroke="#0d8893" stroke-width="1.9"/><path d="M139 1 L139 6.3 L133.8 6.3 Z"/><path d="M127.3 15 L127.3 9.8 L132.5 9.8 Z"/></svg>
<svg class="a" style="left:61px;top:481px" width="17" height="17" viewBox="0 0 17 17"><path d="M12 3.2 L4.2 3.2 L3.1 4.3 L3.1 13 L4.2 14.1 L13 14.1 L14.1 13 L14.1 8" fill="none" stroke="#0d8893" stroke-width="2"/><path d="M8.3 10.8 L15.6 3.5" stroke="#0d8893" stroke-width="2.3"/><path d="M7.6 11.6 L8 9.6 L9.6 11.2 Z" fill="#0d8893"/></svg>
<div class="tog" style="top:481px"><div class="k"></div><div class="t">Off</div></div>
<div class="a lnk" style="left:149px;top:480px;letter-spacing:0.103px">example_short_circuit_operator</div>
<div class="lbl" style="left:456px;top:481px">1 day, 0:00:00</div>
<div class="a" style="left:567px;top:480px">airflow</div>
<svg class="a" style="left:646px;top:477px" width="174" height="28"><circle cx="12.5" cy="13.4" r="12.2" fill="none" stroke="#e4e4e4" stroke-width="1.1"/><circle cx="41.5" cy="13.4" r="12.2" fill="none" stroke="#e4e4e4" stroke-width="1.1"/><circle cx="70.5" cy="13.4" r="12.2" fill="none" stroke="#e4e4e4" stroke-width="1.1"/><circle cx="99.5" cy="13.4" r="12.2" fill="none" stroke="#e4e4e4" stroke-width="1.1"/><circle cx="128.5" cy="13.4" r="12.2" fill="none" stroke="#e4e4e4" stroke-width="1.1"/><circle cx="157.5" cy="13.4" r="12.2" fill="none" stroke="#e4e4e4" stroke-width="1.1"/></svg>
<svg class="a" style="left:917px;top:477px" width="87" height="28"><circle cx="12.5" cy="13.4" r="12.2" fill="none" stroke="#e4e4e4" stroke-width="1.1"/><circle cx="41.5" cy="13.4" r="12.2" fill="none" stroke="#e4e4e4" stroke-width="1.1"/><circle cx="70.5" cy="13.4" r="12.2" fill="none" stroke="#e4e4e4" stroke-width="1.1"/></svg>
<svg class="a" style="left:1042px;top:481px" width="142" height="16" viewBox="0 0 142 16" fill="#0d8893"><circle cx="7" cy="8" r="6.2" fill="none" stroke="#0d8893" stroke-width="1.6"/><path d="M5.8 5.2 L9.6 8 L5.8 10.8 Z"/><path d="M21.3 1 L24 2.2 L26 4.3 L27.4 6.6 L26.5 9 L25 10.7 L17.6 10.7 L16.1 9 L15 6.6 L16.5 4.3 L18.6 2.2 Z"/><rect x="20.3" y="10" width="2" height="4"/><rect x="19.2" y="13.6" width="4.2" height="1.5"/><circle cx="34.9" cy="7.9" r="4.7"/><path d="M35.94 4.04 L36.63 1.43 M37.73 5.07 L39.64 3.16 M38.76 6.86 L41.37 6.17 M38.76 8.94 L41.37 9.63 M37.73 10.73 L39.64 12.64 M35.94 11.76 L36.63 14.37 M33.86 11.76 L33.17 14.37 M32.07 10.73 L30.16 12.64 M31.04 8.94 L28.43 9.63 M31.04 6.86 L28.43 6.17 M32.07 5.07 L30.16 3.16 M33.86 4.04 L33.17 1.43 " stroke="#0d8893" stroke-width="1.05" stroke-linecap="round"/><rect x="43" y="9" width="4" height="6"/><rect x="48" y="2" width="3" height="13"/><path d="M53.1 6 L56.1 6 L56.1 3.1 L60.8 3.1 L61.9 4.3 L61 5.2 L61 8.5 L63.9 8.5 L63.9 14.8 L53.1 14.8 Z"/><path d="M62 5.3 L63.9 7 L62 7 Z"/><path d="M62.1 1.05 L66.7 1.05 L67.8 2.2 L67 3 L67 5.9 L69.8 5.9 L69.8 12.8 L65.1 12.8 L65.1 5.6 Z"/><path d="M67.8 3.2 L69.8 5.1 L67.8 5.1 Z"/><path d="M76.2 2.2 Q77.5 0.6 78.8 2.2 L78.8 12.5 L76.2 12.5 Z"/><path d="M76.6 7.4 L71.5 11.6 M78.4 7.4 L83.9 11.4 M77.5 12 L75 14.8 M77.5 12 L80.2 14.8" fill="none" stroke="#0d8893" stroke-width="1.6"/><rect x="84.2" y="2" width="7.5" height="2"/><rect x="84.2" y="6" width="12.6" height="2"/><rect x="84.2" y="9.4" width="10.6" height="2"/><rect x="84.2" y="13" width="13.5" height="2"/><path d="M107.6 1 L101 8.4 L104.8 8.4 L102.2 15 L110 7.4 L106.2 7.4 Z"/><rect x="112" y="2" width="14.3" height="2"/><rect x="112" y="6" width="15.5" height="2"/><rect x="112" y="9.4" width="14.3" height="2"/><rect x="112" y="13" width="14.3" height="2"/><path d="M128.2 7 A5.6 5.6 0 0 1 137.5 3.6 M139.1 9 A5.6 5.6 0 0 1 129.7 12.5" fill="none" stroke="#0d8893" stroke-width="1.9"/><path d="M139 1 L139 6.3 L133.8 6.3 Z"/><path d="M127.3 15 L127.3 9.8 L132.5 9.8 Z"/></svg>
<svg class="a" style="left:61px;top:521px" width="17" height="17" viewBox="0 0 17 17"><path d="M12 3.2 L4.2 3.2 L3.1 4.3 L3.1 13 L4.2 14.1 L13 14.1 L14.1 13 L14.1 8" fill="none" stroke="#0d8893" stroke-width="2"/><path d="M8.3 10.8 L15.6 3.5" stroke="#0d8893" stroke-width="2.3"/><path d="M7.6 11.6 L8 9.6 L9.6 11.2 Z" fill="#0d8893"/></svg>
<div class="tog" style="top:521px"><div class="k"></div><div class="t">Off</div></div>
<div class="a lnk" style="left:149px;top:520px;letter-spacing:0.05px">example_skip_dag</div>
<div class="lbl" style="left:456px;top:521px">1 day, 0:00:00</div>
<div class="a" style="left:567px;top:520px">airflow</div>
<svg class="a" style="left:646px;top:517px" width="174" height="28"><circle cx="12.5" cy="13.4" r="12.2" fill="none" stroke="#e4e4e4" stroke-width="1.1"/><circle cx="41.5" cy="13.4" r="12.2" fill="none" stroke="#e4e4e4" stroke-width="1.1"/><circle cx="70.5" cy="13.4" r="12.2" fill="none" stroke="#e4e4e4" stroke-width="1.1"/><circle cx="99.5" cy="13.4" r="12.2" fill="none" stroke="#e4e4e4" stroke-width="1.1"/><circle cx="128.5" cy="13.4" r="12.2" fill="none" stroke="#e4e4e4" stroke-width="1.1"/><circle cx="157.5" cy="13.4" r="12.2" fill="none" stroke="#e4e4e4" stroke-width="1.1"/></svg>
<svg class="a" style="left:917px;top:517px" width="87" height="28"><circle cx="12.5" cy="13.4" r="12.2" fill="none" stroke="#e4e4e4" stroke-width="1.1"/><circle cx="41.5" cy="13.4" r="12.2" fill="none" stroke="#e4e4e4" stroke-width="1.1"/><circle cx="70.5" cy="13.4" r="12.2" fill="none" stroke="#e4e4e4" stroke-width="1.1"/></svg>
<svg class="a" style="left:1042px;top:521px" width="142" height="16" viewBox="0 0 142 16" fill="#0d8893"><circle cx="7" cy="8" r="6.2" fill="none" stroke="#0d8893" stroke-width="1.6"/><path d="M5.8 5.2 L9.6 8 L5.8 10.8 Z"/><path d="M21.3 1 L24 2.2 L26 4.3 L27.4 6.6 L26.5 9 L25 10.7 L17.6 10.7 L16.1 9 L15 6.6 L16.5 4.3 L18.6 2.2 Z"/><rect x="20.3" y="10" width="2" height="4"/><rect x="19.2" y="13.6" width="4.2" height="1.5"/><circle cx="34.9" cy="7.9" r="4.7"/><path d="M35.94 4.04 L36.63 1.43 M37.73 5.07 L39.64 3.16 M38.76 6.86 L41.37 6.17 M38.76 8.94 L41.37 9.63 M37.73 10.73 L39.64 12.64 M35.94 11.76 L36.63 14.37 M33.86 11.76 L33.17 14.37 M32.07 10.73 L30.16 12.64 M31.04 8.94 L28.43 9.63 M31.04 6.86 L28.43 6.17 M32.07 5.07 L30.16 3.16 M33.86 4.04 L33.17 1.43 " stroke="#0d8893" stroke-width="1.05" stroke-linecap="round"/><rect x="43" y="9" width="4" height="6"/><rect x="48" y="2" width="3" height="13"/><path d="M53.1 6 L56.1 6 L56.1 3.1 L60.8 3.1 L61.9 4.3 L61 5.2 L61 8.5 L63.9 8.5 L63.9 14.8 L53.1 14.8 Z"/><path d="M62 5.3 L63.9 7 L62 7 Z"/><path d="M62.1 1.05 L66.7 1.05 L67.8 2.2 L67 3 L67 5.9 L69.8 5.9 L69.8 12.8 L65.1 12.8 L65.1 5.6 Z"/><path d="M67.8 3.2 L69.8 5.1 L67.8 5.1 Z"/><path d="M76.2 2.2 Q77.5 0.6 78.8 2.2 L78.8 12.5 L76.2 12.5 Z"/><path d="M76.6 7.4 L71.5 11.6 M78.4 7.4 L83.9 11.4 M77.5 12 L75 14.8 M77.5 12 L80.2 14.8" fill="none" stroke="#0d8893" stroke-width="1.6"/><rect x="84.2" y="2" width="7.5" height="2"/><rect x="84.2" y="6" width="12.6" height="2"/><rect x="84.2" y="9.4" width="10.6" height="2"/><rect x="84.2" y="13" width="13.5" height="2"/><path d="M107.6 1 L101 8.4 L104.8 8.4 L102.2 15 L110 7.4 L106.2 7.4 Z"/><rect x="112" y="2" width="14.3" height="2"/><rect x="112" y="6" width="15.5" height="2"/><rect x="112" y="9.4" width="14.3" height="2"/><rect x="112" y="13" width="14.3" height="2"/><path d="M128.2 7 A5.6 5.6 0 0 1 137.5 3.6 M139.1 9 A5.6 5.6 0 0 1 129.7 12.5" fill="none" stroke="#0d8893" stroke-width="1.9"/><path d="M139 1 L139 6.3 L133.8 6.3 Z"/><path d="M127.3 15 L127.3 9.8 L132.5 9.8 Z"/></svg>
<svg class="a" style="left:61px;top:561px" width="17" height="17" viewBox="0 0 17 17"><path d="M12 3.2 L4.2 3.2 L3.1 4.3 L3.1 13 L4.2 14.1 L13 14.1 L14.1 13 L14.1 8" fill="none" stroke="#0d8893" stroke-width="2"/><path d="M8.3 10.8 L15.6 3.5" stroke="#0d8893" stroke-width="2.3"/><path d="M7.6 11.6 L8 9.6 L9.6 11.2 Z" fill="#0d8893"/></svg>
<div class="tog" style="top:561px"><div class="k"></div><div class="t">Off</div></div>
<div class="a lnk" style="left:149px;top:560px;letter-spacing:0.091px">example_subdag_operator</div>
<div class="lbl" style="left:456px;top:561px">@once</div>
<div class="a" style="left:567px;top:560px">airflow</div>
<svg class="a" style="left:646px;top:557px" width="174" height="28"><circle cx="12.5" cy="13.4" r="12.2" fill="none" stroke="#e4e4e4" stroke-width="1.1"/><circle cx="41.5" cy="13.4" r="12.2" fill="none" stroke="#e4e4e4" stroke-width="1.1"/><circle cx="70.5" cy="13.4" r="12.2" fill="none" stroke="#e4e4e4" stroke-width="1.1"/><circle cx="99.5" cy="13.4" r="12.2" fill="none" stroke="#e4e4e4" stroke-width="1.1"/><circle cx="128.5" cy="13.4" r="12.2" fill="none" stroke="#e4e4e4" stroke-width="1.1"/><circle cx="157.5" cy="13.4" r="12.2" fill="none" stroke="#e4e4e4" stroke-width="1.1"/></svg>
<svg class="a" style="left:917px;top:557px" width="87" height="28"><circle cx="12.5" cy="13.4" r="12.2" fill="none" stroke="#e4e4e4" stroke-width="1.1"/><circle cx="41.5" cy="13.4" r="12.2" fill="none" stroke="#e4e4e4" stroke-width="1.1"/><circle cx="70.5" cy="13.4" r="12.2" fill="none" stroke="#e4e4e4" stroke-width="1.1"/></svg>
<svg class="a" style="left:1042px;top:561px" width="142" height="16" viewBox="0 0 142 16" fill="#0d8893"><circle cx="7" cy="8" r="6.2" fill="none" stroke="#0d8893" stroke-width="1.6"/><path d="M5.8 5.2 L9.6 8 L5.8 10.8 Z"/><path d="M21.3 1 L24 2.2 L26 4.3 L27.4 6.6 L26.5 9 L25 10.7 L17.6 10.7 L16.1 9 L15 6.6 L16.5 4.3 L18.6 2.2 Z"/><rect x="20.3" y="10" width="2" height="4"/><rect x="19.2" y="13.6" width="4.2" height="1.5"/><circle cx="34.9" cy="7.9" r="4.7"/><path d="M35.94 4.04 L36.63 1.43 M37.73 5.07 L39.64 3.16 M38.76 6.86 L41.37 6.17 M38.76 8.94 L41.37 9.63 M37.73 10.73 L39.64 12.64 M35.94 11.76 L36.63 14.37 M33.86 11.76 L33.17 14.37 M32.07 10.73 L30.16 12.64 M31.04 8.94 L28.43 9.63 M31.04 6.86 L28.43 6.17 M32.07 5.07 L30.16 3.16 M33.86 4.04 L33.17 1.43 " stroke="#0d8893" stroke-width="1.05" stroke-linecap="round"/><rect x="43" y="9" width="4" height="6"/><rect x="48" y="2" width="3" height="13"/><path d="M53.1 6 L56.1 6 L56.1 3.1 L60.8 3.1 L61.9 4.3 L61 5.2 L61 8.5 L63.9 8.5 L63.9 14.8 L53.1 14.8 Z"/><path d="M62 5.3 L63.9 7 L62 7 Z"/><path d="M62.1 1.05 L66.7 1.05 L67.8 2.2 L67 3 L67 5.9 L69.8 5.9 L69.8 12.8 L65.1 12.8 L65.1 5.6 Z"/><path d="M67.8 3.2 L69.8 5.1 L67.8 5.1 Z"/><path d="M76.2 2.2 Q77.5 0.6 78.8 2.2 L78.8 12.5 L76.2 12.5 Z"/><path d="M76.6 7.4 L71.5 11.6 M78.4 7.4 L83.9 11.4 M77.5 12 L75 14.8 M77.5 12 L80.2 14.8" fill="none" stroke="#0d8893" stroke-width="1.6"/><rect x="84.2" y="2" width="7.5" height="2"/><rect x="84.2" y="6" width="12.6" height="2"/><rect x="84.2" y="9.4" width="10.6" height="2"/><rect x="84.2" y="13" width="13.5" height="2"/><path d="M107.6 1 L101 8.4 L104.8 8.4 L102.2 15 L110 7.4 L106.2 7.4 Z"/><rect x="112" y="2" width="14.3" height="2"/><rect x="112" y="6" width="15.5" height="2"/><rect x="112" y="9.4" width="14.3" height="2"/><rect x="112" y="13" width="14.3" height="2"/><path d="M128.2 7 A5.6 5.6 0 0 1 137.5 3.6 M139.1 9 A5.6 5.6 0 0 1 129.7 12.5" fill="none" stroke="#0d8893" stroke-width="1.9"/><path d="M139 1 L139 6.3 L133.8 6.3 Z"/><path d="M127.3 15 L127.3 9.8 L132.5 9.8 Z"/></svg>
<svg class="a" style="left:61px;top:601px" width="17" height="17" viewBox="0 0 17 17"><path d="M12 3.2 L4.2 3.2 L3.1 4.3 L3.1 13 L4.2 14.1 L13 14.1 L14.1 13 L14.1 8" fill="none" stroke="#0d8893" stroke-width="2"/><path d="M8.3 10.8 L15.6 3.5" stroke="#0d8893" stroke-width="2.3"/><path d="M7.6 11.6 L8 9.6 L9.6 11.2 Z" fill="#0d8893"/></svg>
<div class="tog" style="top:601px"><div class="k"></div><div class="t">Off</div></div>
<div class="a lnk" style="left:149px;top:600px;letter-spacing:0.129px">example_trigger_controller_dag</div>
<div class="lbl" style="left:456px;top:601px">@once</div>
<div class="a" style="left:567px;top:600px">airflow</div>
<svg class="a" style="left:646px;top:597px" width="174" height="28"><circle cx="12.5" cy="13.4" r="12.2" fill="none" stroke="#e4e4e4" stroke-width="1.1"/><circle cx="41.5" cy="13.4" r="12.2" fill="none" stroke="#e4e4e4" stroke-width="1.1"/><circle cx="70.5" cy="13.4" r="12.2" fill="none" stroke="#e4e4e4" stroke-width="1.1"/><circle cx="99.5" cy="13.4" r="12.2" fill="none" stroke="#e4e4e4" stroke-width="1.1"/><circle cx="128.5" cy="13.4" r="12.2" fill="none" stroke="#e4e4e4" stroke-width="1.1"/><circle cx="157.5" cy="13.4" r="12.2" fill="none" stroke="#e4e4e4" stroke-width="1.1"/></svg>
<svg class="a" style="left:917px;top:597px" width="87" height="28"><circle cx="12.5" cy="13.4" r="12.2" fill="none" stroke="#e4e4e4" stroke-width="1.1"/><circle cx="41.5" cy="13.4" r="12.2" fill="none" stroke="#e4e4e4" stroke-width="1.1"/><circle cx="70.5" cy="13.4" r="12.2" fill="none" stroke="#e4e4e4" stroke-width="1.1"/></svg>
<svg class="a" style="left:1042px;top:601px" width="142" height="16" viewBox="0 0 142 16" fill="#0d8893"><circle cx="7" cy="8" r="6.2" fill="none" stroke="#0d8893" stroke-width="1.6"/><path d="M5.8 5.2 L9.6 8 L5.8 10.8 Z"/><path d="M21.3 1 L24 2.2 L26 4.3 L27.4 6.6 L26.5 9 L25 10.7 L17.6 10.7 L16.1 9 L15 6.6 L16.5 4.3 L18.6 2.2 Z"/><rect x="20.3" y="10" width="2" height="4"/><rect x="19.2" y="13.6" width="4.2" height="1.5"/><circle cx="34.9" cy="7.9" r="4.7"/><path d="M35.94 4.04 L36.63 1.43 M37.73 5.07 L39.64 3.16 M38.76 6.86 L41.37 6.17 M38.76 8.94 L41.37 9.63 M37.73 10.73 L39.64 12.64 M35.94 11.76 L36.63 14.37 M33.86 11.76 L33.17 14.37 M32.07 10.73 L30.16 12.64 M31.04 8.94 L28.43 9.63 M31.04 6.86 L28.43 6.17 M32.07 5.07 L30.16 3.16 M33.86 4.04 L33.17 1.43 " stroke="#0d8893" stroke-width="1.05" stroke-linecap="round"/><rect x="43" y="9" width="4" height="6"/><rect x="48" y="2" width="3" height="13"/><path d="M53.1 6 L56.1 6 L56.1 3.1 L60.8 3.1 L61.9 4.3 L61 5.2 L61 8.5 L63.9 8.5 L63.9 14.8 L53.1 14.8 Z"/><path d="M62 5.3 L63.9 7 L62 7 Z"/><path d="M62.1 1.05 L66.7 1.05 L67.8 2.2 L67 3 L67 5.9 L69.8 5.9 L69.8 12.8 L65.1 12.8 L65.1 5.6 Z"/><path d="M67.8 3.2 L69.8 5.1 L67.8 5.1 Z"/><path d="M76.2 2.2 Q77.5 0.6 78.8 2.2 L78.8 12.5 L76.2 12.5 Z"/><path d="M76.6 7.4 L71.5 11.6 M78.4 7.4 L83.9 11.4 M77.5 12 L75 14.8 M77.5 12 L80.2 14.8" fill="none" stroke="#0d8893" stroke-width="1.6"/><rect x="84.2" y="2" width="7.5" height="2"/><rect x="84.2" y="6" width="12.6" height="2"/><rect x="84.2" y="9.4" width="10.6" height="2"/><rect x="84.2" y="13" width="13.5" height="2"/><path d="M107.6 1 L101 8.4 L104.8 8.4 L102.2 15 L110 7.4 L106.2 7.4 Z"/><rect x="112" y="2" width="14.3" height="2"/><rect x="112" y="6" width="15.5" height="2"/><rect x="112" y="9.4" width="14.3" height="2"/><rect x="112" y="13" width="14.3" height="2"/><path d="M128.2 7 A5.6 5.6 0 0 1 137.5 3.6 M139.1 9 A5.6 5.6 0 0 1 129.7 12.5" fill="none" stroke="#0d8893" stroke-width="1.9"/><path d="M139 1 L139 6.3 L133.8 6.3 Z"/><path d="M127.3 15 L127.3 9.8 L132.5 9.8 Z"/></svg>
<svg class="a" style="left:61px;top:641px" width="17" height="17" viewBox="0 0 17 17"><path d="M12 3.2 L4.2 3.2 L3.1 4.3 L3.1 13 L4.2 14.1 L13 14.1 L14.1 13 L14.1 8" fill="none" stroke="#0d8893" stroke-width="2"/><path d="M8.3 10.8 L15.6 3.5" stroke="#0d8893" stroke-width="2.3"/><path d="M7.6 11.6 L8 9.6 L9.6 11.2 Z" fill="#0d8893"/></svg>
<div class="tog" style="top:641px"><div class="k"></div><div class="t">Off</div></div>
<div class="a lnk" style="left:149px;top:640px;letter-spacing:0.15px">example_trigger_target_dag</div>
<div class="lbl" style="left:456px;top:641px">None</div>
<div class="a" style="left:567px;top:640px">airflow</div>
<svg class="a" style="left:646px;top:637px" width="174" height="28"><circle cx="12.5" cy="13.4" r="12.2" fill="none" stroke="#e4e4e4" stroke-width="1.1"/><circle cx="41.5" cy="13.4" r="12.2" fill="none" stroke="#e4e4e4" stroke-width="1.1"/><circle cx="70.5" cy="13.4" r="12.2" fill="none" stroke="#e4e4e4" stroke-width="1.1"/><circle cx="99.5" cy="13.4" r="12.2" fill="none" stroke="#e4e4e4" stroke-width="1.1"/><circle cx="128.5" cy="13.4" r="12.2" fill="none" stroke="#e4e4e4" stroke-width="1.1"/><circle cx="157.5" cy="13.4" r="12.2" fill="none" stroke="#e4e4e4" stroke-width="1.1"/></svg>
<svg class="a" style="left:917px;top:637px" width="87" height="28"><circle cx="12.5" cy="13.4" r="12.2" fill="none" stroke="#e4e4e4" stroke-width="1.1"/><circle cx="41.5" cy="13.4" r="12.2" fill="none" stroke="#e4e4e4" stroke-width="1.1"/><circle cx="70.5" cy="13.4" r="12.2" fill="none" stroke="#e4e4e4" stroke-width="1.1"/></svg>
<svg class="a" style="left:1042px;top:641px" width="142" height="16" viewBox="0 0 142 16" fill="#0d8893"><circle cx="7" cy="8" r="6.2" fill="none" stroke="#0d8893" stroke-width="1.6"/><path d="M5.8 5.2 L9.6 8 L5.8 10.8 Z"/><path d="M21.3 1 L24 2.2 L26 4.3 L27.4 6.6 L26.5 9 L25 10.7 L17.6 10.7 L16.1 9 L15 6.6 L16.5 4.3 L18.6 2.2 Z"/><rect x="20.3" y="10" width="2" height="4"/><rect x="19.2" y="13.6" width="4.2" height="1.5"/><circle cx="34.9" cy="7.9" r="4.7"/><path d="M35.94 4.04 L36.63 1.43 M37.73 5.07 L39.64 3.16 M38.76 6.86 L41.37 6.17 M38.76 8.94 L41.37 9.63 M37.73 10.73 L39.64 12.64 M35.94 11.76 L36.63 14.37 M33.86 11.76 L33.17 14.37 M32.07 10.73 L30.16 12.64 M31.04 8.94 L28.43 9.63 M31.04 6.86 L28.43 6.17 M32.07 5.07 L30.16 3.16 M33.86 4.04 L33.17 1.43 " stroke="#0d8893" stroke-width="1.05" stroke-linecap="round"/><rect x="43" y="9" width="4" height="6"/><rect x="48" y="2" width="3" height="13"/><path d="M53.1 6 L56.1 6 L56.1 3.1 L60.8 3.1 L61.9 4.3 L61 5.2 L61 8.5 L63.9 8.5 L63.9 14.8 L53.1 14.8 Z"/><path d="M62 5.3 L63.9 7 L62 7 Z"/><path d="M62.1 1.05 L66.7 1.05 L67.8 2.2 L67 3 L67 5.9 L69.8 5.9 L69.8 12.8 L65.1 12.8 L65.1 5.6 Z"/><path d="M67.8 3.2 L69.8 5.1 L67.8 5.1 Z"/><path d="M76.2 2.2 Q77.5 0.6 78.8 2.2 L78.8 12.5 L76.2 12.5 Z"/><path d="M76.6 7.4 L71.5 11.6 M78.4 7.4 L83.9 11.4 M77.5 12 L75 14.8 M77.5 12 L80.2 14.8" fill="none" stroke="#0d8893" stroke-width="1.6"/><rect x="84.2" y="2" width="7.5" height="2"/><rect x="84.2" y="6" width="12.6" height="2"/><rect x="84.2" y="9.4" width="10.6" height="2"/><rect x="84.2" y="13" width="13.5" height="2"/><path d="M107.6 1 L101 8.4 L104.8 8.4 L102.2 15 L110 7.4 L106.2 7.4 Z"/><rect x="112" y="2" width="14.3" height="2"/><rect x="112" y="6" width="15.5" height="2"/><rect x="112" y="9.4" width="14.3" height="2"/><rect x="112" y="13" width="14.3" height="2"/><path d="M128.2 7 A5.6 5.6 0 0 1 137.5 3.6 M139.1 9 A5.6 5.6 0 0 1 129.7 12.5" fill="none" stroke="#0d8893" stroke-width="1.9"/><path d="M139 1 L139 6.3 L133.8 6.3 Z"/><path d="M127.3 15 L127.3 9.8 L132.5 9.8 Z"/></svg>
<svg class="a" style="left:61px;top:681px" width="17" height="17" viewBox="0 0 17 17"><path d="M12 3.2 L4.2 3.2 L3.1 4.3 L3.1 13 L4.2 14.1 L13 14.1 L14.1 13 L14.1 8" fill="none" stroke="#0d8893" stroke-width="2"/><path d="M8.3 10.8 L15.6 3.5" stroke="#0d8893" stroke-width="2.3"/><path d="M7.6 11.6 L8 9.6 L9.6 11.2 Z" fill="#0d8893"/></svg>
<div class="tog" style="top:681px"><div class="k"></div><div class="t">Off</div></div>
<div class="a lnk" style="left:149px;top:680px;letter-spacing:-0.227px">example_xcom</div>
<div class="lbl" style="left:456px;top:681px">@once</div>
<div class="a" style="left:567px;top:680px">airflow</div>
<svg class="a" style="left:646px;top:677px" width="174" height="28"><circle cx="12.5" cy="13.4" r="12.2" fill="none" stroke="#e4e4e4" stroke-width="1.1"/><circle cx="41.5" cy="13.4" r="12.2" fill="none" stroke="#e4e4e4" stroke-width="1.1"/><circle cx="70.5" cy="13.4" r="12.2" fill="none" stroke="#e4e4e4" stroke-width="1.1"/><circle cx="99.5" cy="13.4" r="12.2" fill="none" stroke="#e4e4e4" stroke-width="1.1"/><circle cx="128.5" cy="13.4" r="12.2" fill="none" stroke="#e4e4e4" stroke-width="1.1"/><circle cx="157.5" cy="13.4" r="12.2" fill="none" stroke="#e4e4e4" stroke-width="1.1"/></svg>
<svg class="a" style="left:917px;top:677px" width="87" height="28"><circle cx="12.5" cy="13.4" r="12.2" fill="none" stroke="#e4e4e4" stroke-width="1.1"/><circle cx="41.5" cy="13.4" r="12.2" fill="none" stroke="#e4e4e4" stroke-width="1.1"/><circle cx="70.5" cy="13.4" r="12.2" fill="none" stroke="#e4e4e4" stroke-width="1.1"/></svg>
<svg class="a" style="left:1042px;top:681px" width="142" height="16" viewBox="0 0 142 16" fill="#0d8893"><circle cx="7" cy="8" r="6.2" fill="none" stroke="#0d8893" stroke-width="1.6"/><path d="M5.8 5.2 L9.6 8 L5.8 10.8 Z"/><path d="M21.3 1 L24 2.2 L26 4.3 L27.4 6.6 L26.5 9 L25 10.7 L17.6 10.7 L16.1 9 L15 6.6 L16.5 4.3 L18.6 2.2 Z"/><rect x="20.3" y="10" width="2" height="4"/><rect x="19.2" y="13.6" width="4.2" height="1.5"/><circle cx="34.9" cy="7.9" r="4.7"/><path d="M35.94 4.04 L36.63 1.43 M37.73 5.07 L39.64 3.16 M38.76 6.86 L41.37 6.17 M38.76 8.94 L41.37 9.63 M37.73 10.73 L39.64 12.64 M35.94 11.76 L36.63 14.37 M33.86 11.76 L33.17 14.37 M32.07 10.73 L30.16 12.64 M31.04 8.94 L28.43 9.63 M31.04 6.86 L28.43 6.17 M32.07 5.07 L30.16 3.16 M33.86 4.04 L33.17 1.43 " stroke="#0d8893" stroke-width="1.05" stroke-linecap="round"/><rect x="43" y="9" width="4" height="6"/><rect x="48" y="2" width="3" height="13"/><path d="M53.1 6 L56.1 6 L56.1 3.1 L60.8 3.1 L61.9 4.3 L61 5.2 L61 8.5 L63.9 8.5 L63.9 14.8 L53.1 14.8 Z"/><path d="M62 5.3 L63.9 7 L62 7 Z"/><path d="M62.1 1.05 L66.7 1.05 L67.8 2.2 L67 3 L67 5.9 L69.8 5.9 L69.8 12.8 L65.1 12.8 L65.1 5.6 Z"/><path d="M67.8 3.2 L69.8 5.1 L67.8 5.1 Z"/><path d="M76.2 2.2 Q77.5 0.6 78.8 2.2 L78.8 12.5 L76.2 12.5 Z"/><path d="M76.6 7.4 L71.5 11.6 M78.4 7.4 L83.9 11.4 M77.5 12 L75 14.8 M77.5 12 L80.2 14.8" fill="none" stroke="#0d8893" stroke-width="1.6"/><rect x="84.2" y="2" width="7.5" height="2"/><rect x="84.2" y="6" width="12.6" height="2"/><rect x="84.2" y="9.4" width="10.6" height="2"/><rect x="84.2" y="13" width="13.5" height="2"/><path d="M107.6 1 L101 8.4 L104.8 8.4 L102.2 15 L110 7.4 L106.2 7.4 Z"/><rect x="112" y="2" width="14.3" height="2"/><rect x="112" y="6" width="15.5" height="2"/><rect x="112" y="9.4" width="14.3" height="2"/><rect x="112" y="13" width="14.3" height="2"/><path d="M128.2 7 A5.6 5.6 0 0 1 137.5 3.6 M139.1 9 A5.6 5.6 0 0 1 129.7 12.5" fill="none" stroke="#0d8893" stroke-width="1.9"/><path d="M139 1 L139 6.3 L133.8 6.3 Z"/><path d="M127.3 15 L127.3 9.8 L132.5 9.8 Z"/></svg>
<svg class="a" style="left:61px;top:721px" width="17" height="17" viewBox="0 0 17 17"><path d="M12 3.2 L4.2 3.2 L3.1 4.3 L3.1 13 L4.2 14.1 L13 14.1 L14.1 13 L14.1 8" fill="none" stroke="#0d8893" stroke-width="2"/><path d="M8.3 10.8 L15.6 3.5" stroke="#0d8893" stroke-width="2.3"/><path d="M7.6 11.6 L8 9.6 L9.6 11.2 Z" fill="#0d8893"/></svg>
<div class="tog" style="top:721px"><div class="k"></div><div class="t">Off</div></div>
<div class="a lnk" style="left:149px;top:720px;letter-spacing:0.1px">latest_only</div>
<div class="lbl" style="left:456px;top:721px">4:00:00</div>
<div class="a" style="left:567px;top:720px">Airflow</div>
<svg class="a" style="left:646px;top:717px" width="174" height="28"><circle cx="12.5" cy="13.4" r="12.2" fill="none" stroke="#e4e4e4" stroke-width="1.1"/><circle cx="41.5" cy="13.4" r="12.2" fill="none" stroke="#e4e4e4" stroke-width="1.1"/><circle cx="70.5" cy="13.4" r="12.2" fill="none" stroke="#e4e4e4" stroke-width="1.1"/><circle cx="99.5" cy="13.4" r="12.2" fill="none" stroke="#e4e4e4" stroke-width="1.1"/><circle cx="128.5" cy="13.4" r="12.2" fill="none" stroke="#e4e4e4" stroke-width="1.1"/><circle cx="157.5" cy="13.4" r="12.2" fill="none" stroke="#e4e4e4" stroke-width="1.1"/></svg>
<svg class="a" style="left:917px;top:717px" width="87" height="28"><circle cx="12.5" cy="13.4" r="12.2" fill="none" stroke="#e4e4e4" stroke-width="1.1"/><circle cx="41.5" cy="13.4" r="12.2" fill="none" stroke="#e4e4e4" stroke-width="1.1"/><circle cx="70.5" cy="13.4" r="12.2" fill="none" stroke="#e4e4e4" stroke-width="1.1"/></svg>
<svg class="a" style="left:1042px;top:721px" width="142" height="16" viewBox="0 0 142 16" fill="#0d8893"><circle cx="7" cy="8" r="6.2" fill="none" stroke="#0d8893" stroke-width="1.6"/><path d="M5.8 5.2 L9.6 8 L5.8 10.8 Z"/><path d="M21.3 1 L24 2.2 L26 4.3 L27.4 6.6 L26.5 9 L25 10.7 L17.6 10.7 L16.1 9 L15 6.6 L16.5 4.3 L18.6 2.2 Z"/><rect x="20.3" y="10" width="2" height="4"/><rect x="19.2" y="13.6" width="4.2" height="1.5"/><circle cx="34.9" cy="7.9" r="4.7"/><path d="M35.94 4.04 L36.63 1.43 M37.73 5.07 L39.64 3.16 M38.76 6.86 L41.37 6.17 M38.76 8.94 L41.37 9.63 M37.73 10.73 L39.64 12.64 M35.94 11.76 L36.63 14.37 M33.86 11.76 L33.17 14.37 M32.07 10.73 L30.16 12.64 M31.04 8.94 L28.43 9.63 M31.04 6.86 L28.43 6.17 M32.07 5.07 L30.16 3.16 M33.86 4.04 L33.17 1.43 " stroke="#0d8893" stroke-width="1.05" stroke-linecap="round"/><rect x="43" y="9" width="4" height="6"/><rect x="48" y="2" width="3" height="13"/><path d="M53.1 6 L56.1 6 L56.1 3.1 L60.8 3.1 L61.9 4.3 L61 5.2 L61 8.5 L63.9 8.5 L63.9 14.8 L53.1 14.8 Z"/><path d="M62 5.3 L63.9 7 L62 7 Z"/><path d="M62.1 1.05 L66.7 1.05 L67.8 2.2 L67 3 L67 5.9 L69.8 5.9 L69.8 12.8 L65.1 12.8 L65.1 5.6 Z"/><path d="M67.8 3.2 L69.8 5.1 L67.8 5.1 Z"/><path d="M76.2 2.2 Q77.5 0.6 78.8 2.2 L78.8 12.5 L76.2 12.5 Z"/><path d="M76.6 7.4 L71.5 11.6 M78.4 7.4 L83.9 11.4 M77.5 12 L75 14.8 M77.5 12 L80.2 14.8" fill="none" stroke="#0d8893" stroke-width="1.6"/><rect x="84.2" y="2" width="7.5" height="2"/><rect x="84.2" y="6" width="12.6" height="2"/><rect x="84.2" y="9.4" width="10.6" height="2"/><rect x="84.2" y="13" width="13.5" height="2"/><path d="M107.6 1 L101 8.4 L104.8 8.4 L102.2 15 L110 7.4 L106.2 7.4 Z"/><rect x="112" y="2" width="14.3" height="2"/><rect x="112" y="6" width="15.5" height="2"/><rect x="112" y="9.4" width="14.3" height="2"/><rect x="112" y="13" width="14.3" height="2"/><path d="M128.2 7 A5.6 5.6 0 0 1 137.5 3.6 M139.1 9 A5.6 5.6 0 0 1 129.7 12.5" fill="none" stroke="#0d8893" stroke-width="1.9"/><path d="M139 1 L139 6.3 L133.8 6.3 Z"/><path d="M127.3 15 L127.3 9.8 L132.5 9.8 Z"/></svg>
<svg class="a" style="left:61px;top:761px" width="17" height="17" viewBox="0 0 17 17"><path d="M12 3.2 L4.2 3.2 L3.1 4.3 L3.1 13 L4.2 14.1 L13 14.1 L14.1 13 L14.1 8" fill="none" stroke="#0d8893" stroke-width="2"/><path d="M8.3 10.8 L15.6 3.5" stroke="#0d8893" stroke-width="2.3"/><path d="M7.6 11.6 L8 9.6 L9.6 11.2 Z" fill="#0d8893"/></svg>
<div class="tog" style="top:761px"><div class="k"></div><div class="t">Off</div></div>
<div class="a lnk" style="left:149px;top:760px;letter-spacing:0.087px">latest_only_with_trigger</div>
<div class="lbl" style="left:456px;top:761px">4:00:00</div>
<div class="a" style="left:567px;top:760px">Airflow</div>
<svg class="a" style="left:646px;top:757px" width="174" height="28"><circle cx="12.5" cy="13.4" r="12.2" fill="none" stroke="#e4e4e4" stroke-width="1.1"/><circle cx="41.5" cy="13.4" r="12.2" fill="none" stroke="#e4e4e4" stroke-width="1.1"/><circle cx="70.5" cy="13.4" r="12.2" fill="none" stroke="#e4e4e4" stroke-width="1.1"/><circle cx="99.5" cy="13.4" r="12.2" fill="none" stroke="#e4e4e4" stroke-width="1.1"/><circle cx="128.5" cy="13.4" r="12.2" fill="none" stroke="#e4e4e4" stroke-width="1.1"/><circle cx="157.5" cy="13.4" r="12.2" fill="none" stroke="#e4e4e4" stroke-width="1.1"/></svg>
<svg class="a" style="left:917px;top:757px" width="87" height="28"><circle cx="12.5" cy="13.4" r="12.2" fill="none" stroke="#e4e4e4" stroke-width="1.1"/><circle cx="41.5" cy="13.4" r="12.2" fill="none" stroke="#e4e4e4" stroke-width="1.1"/><circle cx="70.5" cy="13.4" r="12.2" fill="none" stroke="#e4e4e4" stroke-width="1.1"/></svg>
<svg class="a" style="left:1042px;top:761px" width="142" height="16" viewBox="0 0 142 16" fill="#0d8893"><circle cx="7" cy="8" r="6.2" fill="none" stroke="#0d8893" stroke-width="1.6"/><path d="M5.8 5.2 L9.6 8 L5.8 10.8 Z"/><path d="M21.3 1 L24 2.2 L26 4.3 L27.4 6.6 L26.5 9 L25 10.7 L17.6 10.7 L16.1 9 L15 6.6 L16.5 4.3 L18.6 2.2 Z"/><rect x="20.3" y="10" width="2" height="4"/><rect x="19.2" y="13.6" width="4.2" height="1.5"/><circle cx="34.9" cy="7.9" r="4.7"/><path d="M35.94 4.04 L36.63 1.43 M37.73 5.07 L39.64 3.16 M38.76 6.86 L41.37 6.17 M38.76 8.94 L41.37 9.63 M37.73 10.73 L39.64 12.64 M35.94 11.76 L36.63 14.37 M33.86 11.76 L33.17 14.37 M32.07 10.73 L30.16 12.64 M31.04 8.94 L28.43 9.63 M31.04 6.86 L28.43 6.17 M32.07 5.07 L30.16 3.16 M33.86 4.04 L33.17 1.43 " stroke="#0d8893" stroke-width="1.05" stroke-linecap="round"/><rect x="43" y="9" width="4" height="6"/><rect x="48" y="2" width="3" height="13"/><path d="M53.1 6 L56.1 6 L56.1 3.1 L60.8 3.1 L61.9 4.3 L61 5.2 L61 8.5 L63.9 8.5 L63.9 14.8 L53.1 14.8 Z"/><path d="M62 5.3 L63.9 7 L62 7 Z"/><path d="M62.1 1.05 L66.7 1.05 L67.8 2.2 L67 3 L67 5.9 L69.8 5.9 L69.8 12.8 L65.1 12.8 L65.1 5.6 Z"/><path d="M67.8 3.2 L69.8 5.1 L67.8 5.1 Z"/><path d="M76.2 2.2 Q77.5 0.6 78.8 2.2 L78.8 12.5 L76.2 12.5 Z"/><path d="M76.6 7.4 L71.5 11.6 M78.4 7.4 L83.9 11.4 M77.5 12 L75 14.8 M77.5 12 L80.2 14.8" fill="none" stroke="#0d8893" stroke-width="1.6"/><rect x="84.2" y="2" width="7.5" height="2"/><rect x="84.2" y="6" width="12.6" height="2"/><rect x="84.2" y="9.4" width="10.6" height="2"/><rect x="84.2" y="13" width="13.5" height="2"/><path d="M107.6 1 L101 8.4 L104.8 8.4 L102.2 15 L110 7.4 L106.2 7.4 Z"/><rect x="112" y="2" width="14.3" height="2"/><rect x="112" y="6" width="15.5" height="2"/><rect x="112" y="9.4" width="14.3" height="2"/><rect x="112" y="13" width="14.3" height="2"/><path d="M128.2 7 A5.6 5.6 0 0 1 137.5 3.6 M139.1 9 A5.6 5.6 0 0 1 129.7 12.5" fill="none" stroke="#0d8893" stroke-width="1.9"/><path d="M139 1 L139 6.3 L133.8 6.3 Z"/><path d="M127.3 15 L127.3 9.8 L132.5 9.8 Z"/></svg>
<svg class="a" style="left:61px;top:801px" width="17" height="17" viewBox="0 0 17 17"><path d="M12 3.2 L4.2 3.2 L3.1 4.3 L3.1 13 L4.2 14.1 L13 14.1 L14.1 13 L14.1 8" fill="none" stroke="#0d8893" stroke-width="2"/><path d="M8.3 10.8 L15.6 3.5" stroke="#0d8893" stroke-width="2.3"/><path d="M7.6 11.6 L8 9.6 L9.6 11.2 Z" fill="#0d8893"/></svg>
<div class="tog" style="top:801px"><div class="k"></div><div class="t">Off</div></div>
<div class="a lnk" style="left:149px;top:800px;letter-spacing:0.056px">test_utils</div>
<div class="lbl" style="left:456px;top:801px">None</div>
<div class="a" style="left:567px;top:800px">airflow</div>
<svg class="a" style="left:646px;top:797px" width="174" height="28"><circle cx="12.5" cy="13.4" r="12.2" fill="none" stroke="#e4e4e4" stroke-width="1.1"/><circle cx="41.5" cy="13.4" r="12.2" fill="none" stroke="#e4e4e4" stroke-width="1.1"/><circle cx="70.5" cy="13.4" r="12.2" fill="none" stroke="#e4e4e4" stroke-width="1.1"/><circle cx="99.5" cy="13.4" r="12.2" fill="none" stroke="#e4e4e4" stroke-width="1.1"/><circle cx="128.5" cy="13.4" r="12.2" fill="none" stroke="#e4e4e4" stroke-width="1.1"/><circle cx="157.5" cy="13.4" r="12.2" fill="none" stroke="#e4e4e4" stroke-width="1.1"/></svg>
<svg class="a" style="left:917px;top:797px" width="87" height="28"><circle cx="12.5" cy="13.4" r="12.2" fill="none" stroke="#e4e4e4" stroke-width="1.1"/><circle cx="41.5" cy="13.4" r="12.2" fill="none" stroke="#e4e4e4" stroke-width="1.1"/><circle cx="70.5" cy="13.4" r="12.2" fill="none" stroke="#e4e4e4" stroke-width="1.1"/></svg>
<svg class="a" style="left:1042px;top:801px" width="142" height="16" viewBox="0 0 142 16" fill="#0d8893"><circle cx="7" cy="8" r="6.2" fill="none" stroke="#0d8893" stroke-width="1.6"/><path d="M5.8 5.2 L9.6 8 L5.8 10.8 Z"/><path d="M21.3 1 L24 2.2 L26 4.3 L27.4 6.6 L26.5 9 L25 10.7 L17.6 10.7 L16.1 9 L15 6.6 L16.5 4.3 L18.6 2.2 Z"/><rect x="20.3" y="10" width="2" height="4"/><rect x="19.2" y="13.6" width="4.2" height="1.5"/><circle cx="34.9" cy="7.9" r="4.7"/><path d="M35.94 4.04 L36.63 1.43 M37.73 5.07 L39.64 3.16 M38.76 6.86 L41.37 6.17 M38.76 8.94 L41.37 9.63 M37.73 10.73 L39.64 12.64 M35.94 11.76 L36.63 14.37 M33.86 11.76 L33.17 14.37 M32.07 10.73 L30.16 12.64 M31.04 8.94 L28.43 9.63 M31.04 6.86 L28.43 6.17 M32.07 5.07 L30.16 3.16 M33.86 4.04 L33.17 1.43 " stroke="#0d8893" stroke-width="1.05" stroke-linecap="round"/><rect x="43" y="9" width="4" height="6"/><rect x="48" y="2" width="3" height="13"/><path d="M53.1 6 L56.1 6 L56.1 3.1 L60.8 3.1 L61.9 4.3 L61 5.2 L61 8.5 L63.9 8.5 L63.9 14.8 L53.1 14.8 Z"/><path d="M62 5.3 L63.9 7 L62 7 Z"/><path d="M62.1 1.05 L66.7 1.05 L67.8 2.2 L67 3 L67 5.9 L69.8 5.9 L69.8 12.8 L65.1 12.8 L65.1 5.6 Z"/><path d="M67.8 3.2 L69.8 5.1 L67.8 5.1 Z"/><path d="M76.2 2.2 Q77.5 0.6 78.8 2.2 L78.8 12.5 L76.2 12.5 Z"/><path d="M76.6 7.4 L71.5 11.6 M78.4 7.4 L83.9 11.4 M77.5 12 L75 14.8 M77.5 12 L80.2 14.8" fill="none" stroke="#0d8893" stroke-width="1.6"/><rect x="84.2" y="2" width="7.5" height="2"/><rect x="84.2" y="6" width="12.6" height="2"/><rect x="84.2" y="9.4" width="10.6" height="2"/><rect x="84.2" y="13" width="13.5" height="2"/><path d="M107.6 1 L101 8.4 L104.8 8.4 L102.2 15 L110 7.4 L106.2 7.4 Z"/><rect x="112" y="2" width="14.3" height="2"/><rect x="112" y="6" width="15.5" height="2"/><rect x="112" y="9.4" width="14.3" height="2"/><rect x="112" y="13" width="14.3" height="2"/><path d="M128.2 7 A5.6 5.6 0 0 1 137.5 3.6 M139.1 9 A5.6 5.6 0 0 1 129.7 12.5" fill="none" stroke="#0d8893" stroke-width="1.9"/><path d="M139 1 L139 6.3 L133.8 6.3 Z"/><path d="M127.3 15 L127.3 9.8 L132.5 9.8 Z"/></svg>
<svg class="a" style="left:61px;top:841px" width="17" height="17" viewBox="0 0 17 17"><path d="M12 3.2 L4.2 3.2 L3.1 4.3 L3.1 13 L4.2 14.1 L13 14.1 L14.1 13 L14.1 8" fill="none" stroke="#0d8893" stroke-width="2"/><path d="M8.3 10.8 L15.6 3.5" stroke="#0d8893" stroke-width="2.3"/><path d="M7.6 11.6 L8 9.6 L9.6 11.2 Z" fill="#0d8893"/></svg>
<div class="tog" style="top:841px"><div class="k"></div><div class="t">Off</div></div>
<div class="a lnk" style="left:149px;top:840px;letter-spacing:0.143px">tutorial</div>
<div class="lbl" style="left:456px;top:841px">1 day, 0:00:00</div>
<div class="a" style="left:567px;top:840px">airflow</div>
<svg class="a" style="left:646px;top:837px" width="174" height="28"><circle cx="12.5" cy="13.4" r="12.2" fill="none" stroke="#e4e4e4" stroke-width="1.1"/><circle cx="41.5" cy="13.4" r="12.2" fill="none" stroke="#e4e4e4" stroke-width="1.1"/><circle cx="70.5" cy="13.4" r="12.2" fill="none" stroke="#e4e4e4" stroke-width="1.1"/><circle cx="99.5" cy="13.4" r="12.2" fill="none" stroke="#e4e4e4" stroke-width="1.1"/><circle cx="128.5" cy="13.4" r="12.2" fill="none" stroke="#e4e4e4" stroke-width="1.1"/><circle cx="157.5" cy="13.4" r="12.2" fill="none" stroke="#e4e4e4" stroke-width="1.1"/></svg>
<svg class="a" style="left:917px;top:837px" width="87" height="28"><circle cx="12.5" cy="13.4" r="12.2" fill="none" stroke="#e4e4e4" stroke-width="1.1"/><circle cx="41.5" cy="13.4" r="12.2" fill="none" stroke="#e4e4e4" stroke-width="1.1"/><circle cx="70.5" cy="13.4" r="12.2" fill="none" stroke="#e4e4e4" stroke-width="1.1"/></svg>
<svg class="a" style="left:1042px;top:841px" width="142" height="16" viewBox="0 0 142 16" fill="#0d8893"><circle cx="7" cy="8" r="6.2" fill="none" stroke="#0d8893" stroke-width="1.6"/><path d="M5.8 5.2 L9.6 8 L5.8 10.8 Z"/><path d="M21.3 1 L24 2.2 L26 4.3 L27.4 6.6 L26.5 9 L25 10.7 L17.6 10.7 L16.1 9 L15 6.6 L16.5 4.3 L18.6 2.2 Z"/><rect x="20.3" y="10" width="2" height="4"/><rect x="19.2" y="13.6" width="4.2" height="1.5"/><circle cx="34.9" cy="7.9" r="4.7"/><path d="M35.94 4.04 L36.63 1.43 M37.73 5.07 L39.64 3.16 M38.76 6.86 L41.37 6.17 M38.76 8.94 L41.37 9.63 M37.73 10.73 L39.64 12.64 M35.94 11.76 L36.63 14.37 M33.86 11.76 L33.17 14.37 M32.07 10.73 L30.16 12.64 M31.04 8.94 L28.43 9.63 M31.04 6.86 L28.43 6.17 M32.07 5.07 L30.16 3.16 M33.86 4.04 L33.17 1.43 " stroke="#0d8893" stroke-width="1.05" stroke-linecap="round"/><rect x="43" y="9" width="4" height="6"/><rect x="48" y="2" width="3" height="13"/><path d="M53.1 6 L56.1 6 L56.1 3.1 L60.8 3.1 L61.9 4.3 L61 5.2 L61 8.5 L63.9 8.5 L63.9 14.8 L53.1 14.8 Z"/><path d="M62 5.3 L63.9 7 L62 7 Z"/><path d="M62.1 1.05 L66.7 1.05 L67.8 2.2 L67 3 L67 5.9 L69.8 5.9 L69.8 12.8 L65.1 12.8 L65.1 5.6 Z"/><path d="M67.8 3.2 L69.8 5.1 L67.8 5.1 Z"/><path d="M76.2 2.2 Q77.5 0.6 78.8 2.2 L78.8 12.5 L76.2 12.5 Z"/><path d="M76.6 7.4 L71.5 11.6 M78.4 7.4 L83.9 11.4 M77.5 12 L75 14.8 M77.5 12 L80.2 14.8" fill="none" stroke="#0d8893" stroke-width="1.6"/><rect x="84.2" y="2" width="7.5" height="2"/><rect x="84.2" y="6" width="12.6" height="2"/><rect x="84.2" y="9.4" width="10.6" height="2"/><rect x="84.2" y="13" width="13.5" height="2"/><path d="M107.6 1 L101 8.4 L104.8 8.4 L102.2 15 L110 7.4 L106.2 7.4 Z"/><rect x="112" y="2" width="14.3" height="2"/><rect x="112" y="6" width="15.5" height="2"/><rect x="112" y="9.4" width="14.3" height="2"/><rect x="112" y="13" width="14.3" height="2"/><path d="M128.2 7 A5.6 5.6 0 0 1 137.5 3.6 M139.1 9 A5.6 5.6 0 0 1 129.7 12.5" fill="none" stroke="#0d8893" stroke-width="1.9"/><path d="M139 1 L139 6.3 L133.8 6.3 Z"/><path d="M127.3 15 L127.3 9.8 L132.5 9.8 Z"/></svg>
<div class="a" style="left:51px;top:886px;letter-spacing:0.09px">Showing 1 to 16 of 16 entries</div>
<div class="a" style="left:1025px;top:880px;width:166px;height:34px;border:1px solid #ddd;border-radius:4px;background:#fff"></div>
<div class="a" style="left:1105px;top:880px;width:34px;height:34px;background:#005f69"></div>
<div class="a" style="left:1038px;top:887px;color:#777">Previous</div>
<div class="a" style="left:1118px;top:887px;color:#fff">1</div>
<div class="a" style="left:1151px;top:887px;color:#777;letter-spacing:-0.5px">Next</div>
</body></html>
